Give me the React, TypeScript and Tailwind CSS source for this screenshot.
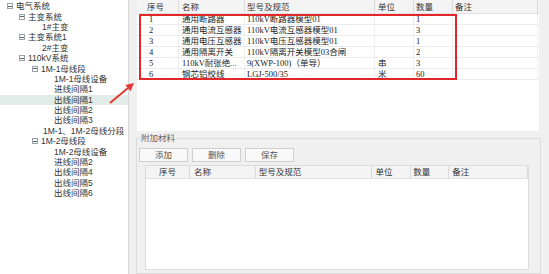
import React from 'react';

interface TreeNode {
  label: string;
  indent: string;
  expandable?: boolean;
  selected?: boolean;
}

const treeNodes: TreeNode[] = [
  { label: '电气系统', indent: 'pl-[7px]', expandable: true },
  { label: '主变系统', indent: 'pl-[19px]', expandable: true },
  { label: '1#主变', indent: 'pl-[42px]' },
  { label: '主变系统1', indent: 'pl-[19px]', expandable: true },
  { label: '2#主变', indent: 'pl-[42px]' },
  { label: '110kV系统', indent: 'pl-[19px]', expandable: true },
  { label: '1M-1母线段', indent: 'pl-[32px]', expandable: true },
  { label: '1M-1母线设备', indent: 'pl-[54px]' },
  { label: '进线间隔1', indent: 'pl-[54px]' },
  { label: '出线间隔1', indent: 'pl-[54px]', selected: true },
  { label: '出线间隔2', indent: 'pl-[54px]' },
  { label: '出线间隔3', indent: 'pl-[54px]' },
  { label: '1M-1、1M-2母线分段', indent: 'pl-[43px]' },
  { label: '1M-2母线段', indent: 'pl-[32px]', expandable: true },
  { label: '1M-2母线设备', indent: 'pl-[54px]' },
  { label: '进线间隔2', indent: 'pl-[54px]' },
  { label: '出线间隔4', indent: 'pl-[54px]' },
  { label: '出线间隔5', indent: 'pl-[54px]' },
  { label: '出线间隔6', indent: 'pl-[54px]' },
];

const materials = [
  { no: '1', name: '通用断路器', spec: '110kV断路器模型01', unit: '', qty: '1' },
  { no: '2', name: '通用电流互感器', spec: '110kV电流互感器模型01', unit: '', qty: '3' },
  { no: '3', name: '通用电压互感器', spec: '110kV电压互感器模型01', unit: '', qty: '1' },
  { no: '4', name: '通用隔离开关', spec: '110kV隔离开关模型03合闸', unit: '', qty: '2' },
  { no: '5', name: '110kV耐张绝...', spec: '9(XWP-100)（单导）', unit: '串', qty: '3' },
  { no: '6', name: '钢芯铝绞线', spec: 'LGJ-500/35', unit: '米', qty: '60' },
];

function ExpandBox() {
  return (
    <span className="relative mr-[3px] flex h-[6px] w-[6px] shrink-0 items-center justify-center border border-[#9aa3ad] bg-white">
      <span className="h-px w-[4px] bg-[#5a6470]" />
    </span>
  );
}

function HeaderCell({ label, className }: { label: string; className: string }) {
  return (
    <div className={`flex h-full items-center border-r border-[#dadada] ${className}`}>
      {label}
    </div>
  );
}

export default function App() {
  return (
    <div className="relative flex h-[274px] w-[549px] overflow-hidden bg-[#f0f0f0] font-['Liberation_Sans','Noto_Sans_CJK_SC',sans-serif] text-[8.5px] leading-[10px] text-[#222]">
      {/* 左侧树 */}
      <div className="h-full w-[129px] shrink-0 border-r border-[#d6d6d6] bg-white pt-[1px] text-[#333]">
        {treeNodes.map((node) => (
          <div
            key={node.label}
            className={`flex h-[10.4px] items-center whitespace-nowrap ${node.indent} ${node.selected ? 'bg-[#e1ebe7]' : ''}`}
          >
            {node.expandable && <ExpandBox />}
            <span>{node.label}</span>
          </div>
        ))}
      </div>

      <div className="w-[7px] shrink-0" />

      <div className="flex w-[405px] shrink-0 flex-col">
        {/* 材料表 */}
        <div className="ml-[1px] h-[131px] w-[402px] bg-white">
          <div className="flex h-[14px] border-b border-[#e2e2e2] bg-[#f4f4f4] text-[#333]">
            <HeaderCell label="序号" className="w-[42px] pl-[10px]" />
            <HeaderCell label="名称" className="w-[66px] pl-[3px]" />
            <HeaderCell label="型号及规范" className="w-[130px] pl-[2px]" />
            <HeaderCell label="单位" className="w-[39px] pl-[3px]" />
            <HeaderCell label="数量" className="w-[39px] pl-[2px]" />
            <HeaderCell label="备注" className="w-[85px] pl-[2px]" />
          </div>
          <div className="relative font-['Liberation_Serif','Noto_Sans_CJK_SC',serif]">
            {materials.map((row) => (
              <div key={row.no} className="flex h-[11px] border-b border-[#ececec]">
                <div className="flex w-[42px] items-center border-r border-[#efefef] pl-[12px]">{row.no}</div>
                <div className="flex w-[66px] items-center overflow-hidden whitespace-nowrap border-r border-[#efefef] pl-[3px]">{row.name}</div>
                <div className="flex w-[130px] items-center whitespace-nowrap border-r border-[#efefef] pl-[2px]">{row.spec}</div>
                <div className="flex w-[39px] items-center border-r border-[#efefef] pl-[3px]">{row.unit}</div>
                <div className="flex w-[39px] items-center border-r border-[#efefef] pl-[2px]">{row.qty}</div>
                <div className="w-[85px] border-r border-[#efefef]" />
              </div>
            ))}
            {/* 红色标注框 */}
            <div className="absolute left-[2px] top-0 h-[66px] w-[318px] border-2 border-[#e3262a]" />
          </div>
        </div>

        {/* 附加材料 */}
        <fieldset className="mt-[1px] h-[142px] border border-[#dcdcdc] px-[2px]">
          <legend className="ml-[1px] px-[1px] leading-[12px] text-[#666]">附加材料</legend>
          <div className="mt-[4px] flex gap-[4px]">
            {['添加', '删除', '保存'].map((label) => (
              <button
                key={label}
                className="flex h-[14px] w-[49px] items-center justify-center border border-[#cfcfcf] bg-[#f9f9f9] text-[#555]"
              >
                {label}
              </button>
            ))}
          </div>
          <div className="ml-[6px] mt-[3px] h-[105px] w-[384px] border border-[#dcdcdc] bg-white">
            <div className="flex h-[13px] border-b border-[#e2e2e2] bg-[#f4f4f4] text-[#333]">
              <HeaderCell label="序号" className="w-[44px] justify-center" />
              <HeaderCell label="名称" className="w-[66px] pl-[4px]" />
              <HeaderCell label="型号及规范" className="w-[117px] pl-[3px]" />
              <HeaderCell label="单位" className="w-[39px] pl-[3px]" />
              <HeaderCell label="数量" className="w-[38px] pl-[2px]" />
              <HeaderCell label="备注" className="w-[79px] pl-[3px]" />
            </div>
          </div>
        </fieldset>
      </div>

      {/* 红色箭头 */}
      <svg className="absolute left-[105px] top-[78px]" width="32" height="28" viewBox="0 0 32 28">
        <line x1="5" y1="25" x2="23" y2="10" stroke="#e53935" strokeWidth="2" />
        <polygon points="29,5 25.5,13.2 20.3,7" fill="#e53935" />
      </svg>
    </div>
  );
}
